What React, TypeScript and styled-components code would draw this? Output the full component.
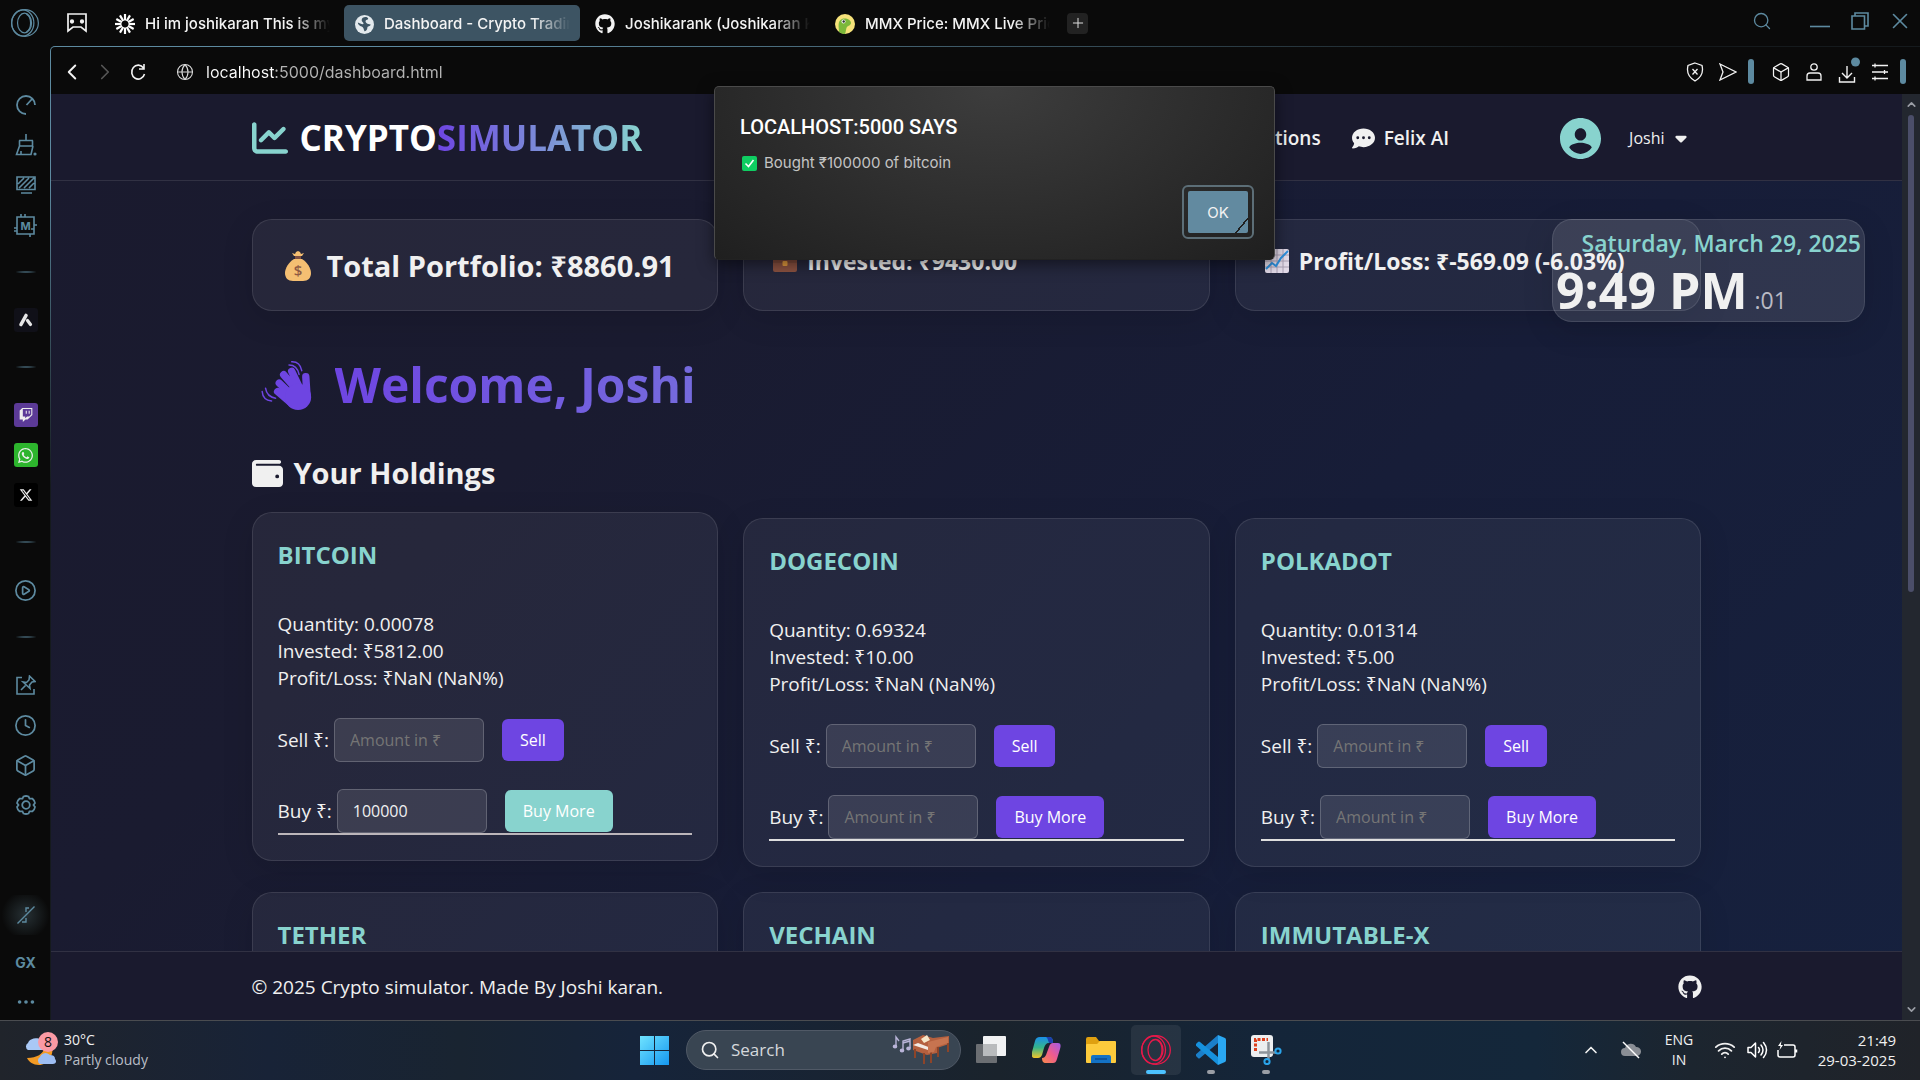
import React from "react";
import styled, { createGlobalStyle, css } from "styled-components";
import {
  Search, Globe, Box, Clock, CirclePlay, Ellipsis, Plus, ChevronLeft, ChevronRight,
  ChevronUp, ChevronDown, Minus, X, Wifi, Volume2,
} from "lucide-react";
import { FaChartLine, FaWallet, FaCommentDots, FaGithub, FaTwitch, FaWhatsapp, FaXTwitter, FaCaretDown } from "react-icons/fa6";

const c = {
  chrome: "#0a0a0a",
  accent: "#5d8aa0",
  ink: "#f0f0f0",
  teal: "#88d3ce",
  purple: "#6e45e2",
  navy: "#1a1a2e",
  line: "rgba(255, 255, 255, 0.1)",
};

const GlobalStyle = createGlobalStyle`
  *, *::before, *::after { box-sizing: border-box; }
  body { margin: 0; background: ${c.chrome}; font-family: "Open Sans", "Noto Sans", sans-serif; color: ${c.ink}; }
  h1, h2, h3, p { margin: 0; }
  button, input { font: inherit; color: inherit; }
  button { border: 0; padding: 0; background: none; cursor: pointer; }
  a { color: inherit; text-decoration: none; }
  svg { display: block; flex: none; }
`;

/* ---------- shell ---------- */

const Screen = styled.div`
  height: 100vh;
  display: grid;
  grid-template: 46px minmax(0, 1fr) 60px / 50px minmax(0, 1fr);
  overflow: hidden;
`;

const IconButton = styled.button<{ $w?: number; $color?: string }>`
  width: ${(p) => p.$w ?? 33}px;
  height: 40px;
  display: grid;
  place-items: center;
  flex: none;
  color: ${(p) => p.$color ?? "#f2f2f2"};
`;

const TabBar = styled.header`
  grid-column: 1 / -1;
  display: flex;
  align-items: center;
  background: ${c.chrome};
  font: 500 15px Inter, sans-serif;
`;

const TabList = styled.nav`
  display: flex;
  gap: 4px;
  margin-right: 7px;
`;

const Tab = styled.a<{ $active?: boolean }>`
  width: 236px;
  height: 36px;
  display: flex;
  align-items: center;
  gap: 10px;
  padding: 2px 10px 0 11px;
  border-radius: 5px;
  color: #f4f4f4;
  background: ${(p) => (p.$active ? "#3d5463" : "transparent")};
`;

const TabTitle = styled.span`
  flex: 1;
  overflow: hidden;
  white-space: nowrap;
  line-height: 24px;
  mask-image: linear-gradient(90deg, #000 80%, transparent);
`;

const NewTab = styled.button`
  width: 21px;
  height: 21px;
  display: grid;
  place-items: center;
  border-radius: 4px;
  background: #222;
  color: #ddd;
`;

const WindowControls = styled.div`
  margin-left: auto;
  display: flex;
  align-items: center;
  padding-bottom: 5px;
`;

const SideBar = styled.aside`
  display: flex;
  flex-direction: column;
  padding: 39px 0 0 1px;
  background: ${c.chrome};
  overflow: hidden;
`;

const SideItem = styled.button<{ $glow?: boolean }>`
  height: 40px;
  flex: none;
  display: grid;
  place-items: center;
  color: ${c.accent};
  font: 700 14px Inter, sans-serif;
  background: ${(p) => (p.$glow ? "radial-gradient(circle 24px, #263034, transparent)" : "none")};
`;

const Badge = styled.span<{ $bg: string }>`
  width: 24px;
  height: 24px;
  display: grid;
  place-items: center;
  border-radius: 3px;
  color: #eee;
  background: ${(p) => p.$bg};
`;

const SideRule = styled.hr`
  width: 24px;
  height: 2px;
  margin: 26px auto 27px;
  border: 0;
  flex: none;
  background: radial-gradient(closest-side, ${c.accent}, transparent);
`;

const SideBottom = styled.div`
  margin-top: auto;
  display: grid;
  grid-template-rows: 47px 40px 38px;
`;

const Frame = styled.div`
  position: relative;
  padding: 1px 0 0 1px;
  border-top-left-radius: 5px;
  background: radial-gradient(1500px 440px at 0 0, ${c.accent} 30%, #151a1d);
`;

const FrameInner = styled.div`
  height: 100%;
  display: flex;
  flex-direction: column;
  border-top-left-radius: 4px;
  overflow: hidden;
  background: ${c.chrome};
`;

const AddressBar = styled.div`
  height: 47px;
  flex: none;
  display: flex;
  align-items: center;
  padding: 2px 14px 0 4px;
`;

const AddressField = styled.label`
  flex: 1;
  display: flex;
  align-items: center;
  gap: 12px;
  margin-left: 22px;
`;

const AddressInput = styled.input`
  flex: 1;
  border: 0;
  padding: 0;
  outline: 0;
  font: 400 16px Inter, sans-serif;
  line-height: 24px;
  color: transparent;
  background: linear-gradient(90deg, #fff 69px, #b4b4b4 69px);
  background-clip: text;
  -webkit-background-clip: text;
`;

const AccentBar = styled.span`
  width: 6px;
  height: 25px;
  margin-left: 4px;
  border-radius: 3px;
  background: ${c.accent};
`;

const BarGroup = styled.div`
  display: flex;
  align-items: center;
  margin-left: 10px;
`;

/* ---------- page ---------- */

const Viewport = styled.div`
  flex: 1;
  min-height: 0;
  display: flex;
`;

const Page = styled.div`
  flex: 1;
  min-width: 0;
  position: relative;
  display: flex;
  flex-direction: column;
  background: linear-gradient(135deg, #1a1a2e 0%, #1a1b30 30%, #171d38 62%, #16213e 100%);
`;

const ScrollTrack = styled.div`
  width: 18px;
  flex: none;
  display: flex;
  flex-direction: column;
  align-items: center;
  gap: 4px;
  padding: 4px 0;
  background: #23272f;
  color: #9a9da5;
`;

const ScrollThumb = styled.div`
  width: 6px;
  flex: 0 0 52%;
  margin-bottom: auto;
  border-radius: 3px;
  background: #4b4e69;
`;

const Container = styled.div`
  width: 100%;
  max-width: 1450px;
  margin: 0 auto;
  padding-top: 2px;
  display: flex;
  align-items: center;
`;

const SiteHeader = styled.header`
  height: 87px;
  flex: none;
  display: flex;
  background: ${c.navy};
  border-bottom: 1px solid ${c.line};
`;

const Logo = styled.a`
  display: flex;
  align-items: center;
  gap: 12px;
  color: ${c.teal};
  font-size: 35px;
  line-height: 48px;
  font-weight: 700;
`;

const LogoText = styled.span`
  color: #fff;
`;

const gradientText = css`
  color: transparent;
  background: linear-gradient(90deg, ${c.purple}, ${c.teal});
  background-clip: text;
  -webkit-background-clip: text;
`;

const LogoAccent = styled.span`
  ${gradientText}
`;

const SiteNav = styled.nav`
  margin-left: auto;
  display: flex;
  gap: 31px;
  font-size: 19px;
  line-height: 26px;
  font-weight: 600;
`;

const NavLink = styled.a`
  display: flex;
  align-items: center;
  gap: 9px;
`;

const UserMenu = styled.button`
  display: flex;
  align-items: center;
  gap: 7px;
  margin: 0 12px 0 111px;
  font-size: 16px;
  line-height: 24px;
`;

const UserName = styled.span`
  margin-left: 21px;
`;

const Main = styled.main`
  flex: 1;
  min-height: 0;
  overflow: hidden;
  padding-top: 38px;
`;

const Content = styled.div`
  width: 100%;
  max-width: 1450px;
  margin: 0 auto;
`;

const CardGrid = styled.div`
  display: grid;
  grid-template-columns: repeat(3, minmax(0, 1fr));
  gap: 25px;
`;

const cardSurface = css`
  background: rgba(255, 255, 255, 0.055);
  border: 1px solid ${c.line};
  border-radius: 20px;
  box-shadow: 0 8px 32px rgba(0, 0, 0, 0.12);
`;

const SummaryCard = styled.section<{ $large?: boolean }>`
  ${cardSurface}
  height: 92px;
  display: flex;
  align-items: flex-start;
  gap: ${(p) => (p.$large ? 15 : 10)}px;
  padding: ${(p) => (p.$large ? "25px 31px" : "24px 29px")};
  font-weight: 700;
  font-size: ${(p) => (p.$large ? 29 : 23)}px;
  line-height: ${(p) => (p.$large ? 42 : 34)}px;
  white-space: nowrap;
  svg { margin: 5px 0; }
`;

const Welcome = styled.h1`
  display: flex;
  align-items: center;
  gap: 21px;
  margin-top: 40px;
  padding-left: 8px;
  font-size: 48px;
  line-height: 68px;
  font-weight: 700;
`;

const WelcomeText = styled.span`
  flex: 1;
  ${gradientText}
`;

const SectionTitle = styled.h2`
  display: flex;
  align-items: center;
  gap: 11px;
  margin: 34px 0 25px;
  font-size: 29px;
  line-height: 40px;
  font-weight: 700;
`;

const HoldingCard = styled.article<{ $hover?: boolean }>`
  ${cardSurface}
  height: 349px;
  padding: 25px;
  transform: ${(p) => (p.$hover ? "translateY(-6px)" : "none")};
`;

const CoinName = styled.h3`
  margin-bottom: 39px;
  font-size: 24px;
  line-height: 34px;
  font-weight: 700;
  color: ${c.teal};
`;

const Stat = styled.p`
  font-size: 19px;
  line-height: 27px;
`;

const TradeRow = styled.form`
  display: flex;
  align-items: center;
  margin-top: 26px;
  font-size: 19px;
  & + & { margin-top: 27px; }
`;

const AmountInput = styled.input`
  width: 150px;
  height: 44px;
  margin: 0 18px 0 5px;
  padding: 0 15px;
  border: 1px solid rgba(255, 255, 255, 0.2);
  border-radius: 6px;
  outline: 0;
  font-size: 16px;
  background: rgba(255, 255, 255, 0.1);
  &::placeholder { color: #757575; opacity: 1; }
`;

const TradeButton = styled.button<{ $hover?: boolean }>`
  height: 42px;
  padding: 0 18px;
  border-radius: 6px;
  font-size: 16px;
  color: #fff;
  background: ${(p) => (p.$hover ? c.teal : c.purple)};
`;

const CardRule = styled.hr<{ $dim?: boolean }>`
  height: 2px;
  margin: 0;
  border: 0;
  background: ${(p) => (p.$dim ? "#bcb6ba" : "#dedede")};
`;

const ClockPanel = styled.aside`
  position: absolute;
  top: 125px;
  right: 37px;
  height: 103px;
  width: 313px;
  padding: 6px 3px;
  border: 1px solid ${c.line};
  border-radius: 20px;
  background: rgba(255, 255, 255, 0.11);
  box-shadow: 0 8px 32px rgba(0, 0, 0, 0.12);
`;

const ClockDate = styled.div`
  text-align: right;
  font-size: 23px;
  line-height: 34px;
  font-weight: 600;
  color: ${c.teal};
  white-space: nowrap;
`;

const ClockTime = styled.div`
  display: flex;
  align-items: baseline;
  gap: 7px;
  font-size: 50px;
  line-height: 60px;
  font-weight: 700;
`;

const Seconds = styled.span`
  font-size: 23px;
  font-weight: 400;
  color: #b9bac4;
`;

const SiteFooter = styled.footer`
  height: 69px;
  flex: none;
  display: flex;
  background: ${c.navy};
  border-top: 1px solid ${c.line};
  font-size: 19px;
`;

const FooterLink = styled.a`
  margin-left: auto;
`;

/* ---------- dialog ---------- */

const Dialog = styled.div`
  position: absolute;
  top: 40px;
  left: calc(50% - 271px);
  width: 561px;
  height: 174px;
  padding: 27px 20px 20px 25px;
  display: flex;
  flex-direction: column;
  border: 1px solid #4a4a4a;
  border-bottom-color: #222;
  border-radius: 5px;
  background: radial-gradient(ellipse at 50% 0, #3d3d3d, #1f1f1f);
  box-shadow: 0 4px 16px rgba(0, 0, 0, 0.5);
  font-family: Inter, sans-serif;
`;

const DialogTitle = styled.h2`
  font: 500 20px/26px Roboto, sans-serif;
  text-transform: uppercase;
  color: #fff;
`;

const DialogMessage = styled.p`
  display: flex;
  align-items: center;
  gap: 7px;
  margin: 11px 0 0 2px;
  font-size: 15px;
  line-height: 24px;
  color: #c4c4c4;
`;

const OkButton = styled.button`
  margin: auto 0 0 auto;
  width: 72px;
  height: 54px;
  padding: 4px;
  border: 2px solid #5c6e77;
  border-radius: 6px;
  font-size: 15px;
  color: #f2f2f2;
`;

const OkFace = styled.span`
  height: 100%;
  display: grid;
  place-items: center;
  border-radius: 2px;
  background: linear-gradient(130deg, #628aa0 86%, #202020 86%, #202020 88%, #628aa0 88%);
`;

/* ---------- taskbar ---------- */

const TaskBar = styled.footer`
  grid-column: 1 / -1;
  display: grid;
  grid-template-columns: 1fr auto 1fr;
  align-items: center;
  border-top: 1px solid #4a4c50;
  padding-bottom: 1px;
  background: linear-gradient(90deg, #20242b 0, #182337 14%, #192431 24%, #16243a 33%, #1a232c 52%, #142539 66%, #14273a 80%, #1c252f 88%, #202329 100%);
  font-size: 14px;
  line-height: 20px;
`;

const Weather = styled.button`
  display: flex;
  align-items: center;
  gap: 5px;
  padding-left: 22px;
  text-align: left;
`;

const Muted = styled.div`
  color: #b9bec6;
`;

const TaskIcons = styled.div`
  display: flex;
  align-items: center;
  gap: 5px;
`;

const TaskButton = styled.button<{ $active?: boolean; $running?: boolean }>`
  position: relative;
  width: 50px;
  height: 50px;
  display: grid;
  place-items: center;
  border-radius: 5px;
  background: ${(p) => (p.$active ? "rgba(255,255,255,0.07)" : "none")};
  &::after {
    content: "";
    position: absolute;
    bottom: 1px;
    width: ${(p) => (p.$active ? 20 : p.$running ? 8 : 0)}px;
    height: 4px;
    border-radius: 2px;
    background: ${(p) => (p.$active ? "#4cc2ff" : "#9a9ea5")};
  }
`;

const TaskSearch = styled.label`
  width: 275px;
  height: 40px;
  display: flex;
  align-items: center;
  gap: 11px;
  margin-left: 2px;
  padding: 0 10px 0 13px;
  border: 1px solid #505966;
  border-radius: 20px;
  background: #394552;
`;

const TaskSearchInput = styled.input`
  flex: 1;
  min-width: 0;
  border: 0;
  padding: 0;
  outline: 0;
  background: none;
  font-size: 17px;
  &::placeholder { color: #d5d8dc; opacity: 1; }
`;

const Tray = styled.div`
  display: flex;
  align-items: center;
  justify-content: flex-end;
  padding-right: 24px;
`;

const TrayItem = styled.button<{ $w: number }>`
  width: ${(p) => p.$w}px;
  display: grid;
  justify-items: center;
  text-align: center;
`;

const TrayClock = styled.button`
  width: 93px;
  text-align: right;
  font-size: 15px;
`;

/* ---------- drawings ---------- */

const OperaMark = ({ size, color }: { size: number; color: string }) => (
  <svg width={size} height={size} viewBox="0 0 30 30" fill="none" stroke={color} strokeWidth="1.3">
    <ellipse cx="15" cy="15" rx="14.300" ry="14.300" />
    <path d="M15 .7C8 .7 4 6 2.700 12.500" opacity="0" />
    <ellipse cx="12.600" cy="15" rx="11.900" ry="14" />
    <ellipse cx="14.500" cy="15" rx="7.500" ry="10.500" />
    <path d="M16.500 5.500c6 3 6 16 0 19" />
  </svg>
);

const line = { fill: "none", stroke: "currentColor", strokeWidth: 1.6 } as const;

const PadIcon = () => (
  <svg width="20" height="20" viewBox="0 0 20 20" {...line} strokeWidth="1.700">
    <path d="M1 1h18v17l-5-4H6l-5 4z" />
    <circle cx="5" cy="8.500" r="1.300" fill="currentColor" /><circle cx="15" cy="8.500" r="1.300" fill="currentColor" />
  </svg>
);

const BurstIcon = () => (
  <svg width="20" height="20" viewBox="-10 -10 20 20" stroke="#fff" strokeWidth="2.200">
    {Array.from({ length: 12 }, (_, i) => <line key={i} x1="0" y1="-3.500" x2="0" y2="-10" transform={`rotate(${i * 30})`} />)}
  </svg>
);

const EarthIcon = () => (
  <svg width="19" height="19" viewBox="0 0 20 20">
    <circle cx="10" cy="10" r="10" fill="#e3e9ed" />
    <path d="M13 2.500c-3-1-6 .5-6 3 0 2 2 2 2 3.500S5 9 3 8c0 2 2 4 4 4 2 .5 2 3 3 5 1.500.5 3-1.500 3-3.500s3-1 3.500-3.500c-2-.5-3 0-4.500-1.500s-1-3 .5-3.500 2-1.500.5-2.500z" fill="#3d5463" />
  </svg>
);

const GeckoIcon = () => (
  <svg width="20" height="20" viewBox="0 0 20 20">
    <circle cx="10" cy="10" r="10" fill="#f6e27a" />
    <path d="M4 18c0-5-2-11 3-13 4-1.500 9 1 9 4 0 2-3 3-4 4s-1 5-2 7c-2 0-4-.5-6-2z" fill="#7cb83a" />
    <circle cx="8.500" cy="7.500" r="2" fill="#fff" /><circle cx="8.700" cy="7.500" r="1.200" fill="#333" />
  </svg>
);

const ReloadIcon = () => (
  <svg width="16" height="18" viewBox="0 0 16 18" {...line}>
    <path d="M13.500 5A6.500 7 0 1 0 14.500 11M14 1v5h-5" />
  </svg>
);

const GlobeLine = () => <Globe size={18} strokeWidth={1.5} color="#d8d8d8" />;

const SpeedIcon = () => (
  <svg width="20" height="20" viewBox="0 0 20 20" {...line} strokeWidth="1.800">
    <path d="M10 19A9 9 0 1 1 19 10M10.500 10l6-6.500" />
  </svg>
);

const BroomIcon = () => (
  <svg width="22" height="22" viewBox="0 0 22 22" {...line}>
    <path d="M11 0v6M4 6.500h14M4.500 6.500v5.500h13V6.500M4.500 12L1.500 20.500h14.500l2-8.500M6 20v-3" />
    <circle cx="20" cy="20" r=".8" fill="currentColor" />
  </svg>
);

const MonitorIcon = () => (
  <svg width="20" height="18" viewBox="0 0 20 18" {...line}>
    <path d="M1 1h18v12.500H1zM5 17h11M2 8l6-6M3 12L13 2M8 12L18 2M13 12l5-5" />
  </svg>
);

const ChipIcon = () => (
  <svg width="23" height="23" viewBox="0 0 23 23" {...line}>
    <path d="M3 3h17v17H3zM7 3V0M11 3V0M16 20v3M0 14h3M0 17h3M20 11h3M20 15h-3" />
    <text x="11.500" y="15.500" fontSize="11" fontWeight="700" textAnchor="middle" fill="currentColor" stroke="none" fontFamily="Inter">M</text>
  </svg>
);

const PeakIcon = () => (
  <svg width="16" height="16" viewBox="0 0 16 16" fill="none" stroke="#e6e6e6" strokeLinecap="round">
    <path d="M3 12.500L8 3.500" strokeWidth="3.600" /><path d="M9.500 8.500l3 4" strokeWidth="3.200" />
  </svg>
);

const PinIcon = () => (
  <svg width="20" height="20" viewBox="0 0 20 20" {...line}>
    <path d="M6 2.500H1V19h17v-5M13.500 1l5.500 5.500-3 .5-2.500 3 .5 3.500L7 7l3.500.5L13 5zM9.500 10.500L5 15" />
  </svg>
);

const CogIcon = () => (
  <svg width="20" height="20" viewBox="0 0 20 20" {...line} strokeWidth="1.800">
    <path d="M7.500 1.500Q10 .5 12.500 1.500L13.500 3.700 16.500 3.700Q18.700 5.500 19 8L17.500 10 19 12Q18.700 14.500 16.500 16.300L13.500 16.300 12.500 18.500Q10 19.500 7.500 18.500L6.500 16.300 3.500 16.300Q1.300 14.500 1 12L2.500 10 1 8Q1.300 5.500 3.500 3.700L6.500 3.700Z" />
    <circle cx="10" cy="10" r="3.800" />
  </svg>
);

const MuteNoteIcon = () => (
  <svg width="18" height="18" viewBox="0 0 18 18" {...line} strokeWidth="1.400">
    <path d="M.5 17.500l17-17M9 6V2h3M9 12v4H5" />
  </svg>
);

const ShieldX = () => (
  <svg width="18" height="20" viewBox="0 0 18 20" {...line} strokeWidth="1.300">
    <path d="M9 1l7 2.500q2.500 10-7 15.500Q-.5 13.500 2 3.500zM6.500 7l5 5.500M11.500 7l-5 5.500" />
  </svg>
);

const SendIcon = () => (
  <svg width="18" height="18" viewBox="0 0 18 18" {...line} strokeWidth="1.300"><path d="M1 1l16 8L1 17l3-8z" /></svg>
);

const PersonIcon = () => (
  <svg width="16" height="18" viewBox="0 0 16 18" {...line} strokeWidth="1.300">
    <circle cx="8" cy="4" r="3.200" /><path d="M1 17v-4q0-3 3-3h8q3 0 3 3v4z" />
  </svg>
);

const DownloadIcon = () => (
  <svg width="26" height="30" viewBox="0 0 26 30" {...line} strokeWidth="1.400">
    <path d="M13 9v12M8 16l5 5 5-5M5.500 20v5h15v-5" />
    <circle cx="21.500" cy="5" r="4.500" fill={c.accent} stroke="none" />
  </svg>
);

const SlidersIcon = () => (
  <svg width="16" height="18" viewBox="0 0 16 18" {...line} strokeWidth="1.300">
    <path d="M0 2.500h16M0 9h16M0 15.500h16M3 .5v4M12.500 7v4M3 13.500v4" />
  </svg>
);

const RestoreIcon = () => (
  <svg width="18" height="18" viewBox="0 0 18 18" {...line}><path d="M1 4h12.500v13H1zM4 4V1h13v13h-3.500" /></svg>
);

const MinimiseIcon = () => (
  <svg width="20" height="18" viewBox="0 0 20 18" {...line}><path d="M0 14.500h20" /></svg>
);

const AccountIcon = () => (
  <svg width="41" height="41" viewBox="2 2 20 20" fill={c.teal}>
    <path d="M12 2C6.480 2 2 6.480 2 12s4.480 10 10 10 10-4.480 10-10S17.520 2 12 2zm0 5c1.500 0 2.800 1.340 2.800 3s-1.300 3-2.800 3-2.800-1.340-2.800-3 1.300-3 2.800-3zm0 12.500a7 7 0 01-5.500-3.100c.6-1.600 3.500-2.300 5.500-2.300s4.900.7 5.500 2.300a7 7 0 01-5.500 3.100z" />
  </svg>
);

const MoneyBag = () => (
  <svg width="28" height="32" viewBox="0 0 28 32">
    <path d="M10 6L8 3l3 1 1-2 2-1 2 1 1 2 3-1-2 3z" fill="#f5bf72" />
    <path d="M11 6h6v3h-6z" fill="#7e4f43" />
    <path d="M10 9h8c5 3 9 9 9 14s-3 8-8 8H9c-5 0-8-3-8-8s4-11 9-14z" fill="#f5bf72" />
    <text x="14" y="25.500" fontSize="15" fontWeight="600" textAnchor="middle" fill="#8f5a44">$</text>
  </svg>
);

const Briefcase = () => (
  <svg width="24" height="24" viewBox="0 0 24 24">
    <path d="M8 5V2h8v3" fill="none" stroke="#5a3a32" strokeWidth="2" />
    <rect y="5" width="24" height="18" rx="2" fill="#8a5140" /><path d="M0 6h24v8H0z" fill="#7d4839" />
    <rect x="9.500" y="12" width="5" height="5" rx="1" fill="#e39a3d" />
  </svg>
);

const ChartEmoji = () => (
  <svg width="24" height="24" viewBox="0 0 24 24">
    <rect width="24" height="24" rx="2" fill="#e3dbe9" />
    <path d="M6 0v24M12 0v24M18 0v24M0 6h24M0 12h24M0 18h24" stroke="#aaa0b4" />
    <path d="M1 20l6-6 4 3 5-8 7-7" fill="none" stroke="#2d8fdc" strokeWidth="2" />
  </svg>
);

const WaveHand = () => (
  <svg width="54" height="51" viewBox="90 480 160 152" fill="none" stroke={c.purple} strokeLinecap="round">
    <g strokeWidth="22"><path d="M226 530l4 60M184 514l22 45M160 524l40 46M147 549l45 43M142 574l40 34" /></g>
    <circle cx="203" cy="590" r="39" fill={c.purple} stroke="none" />
    <path d="M184 485q25-1 30 27M176 495q24 0 30 28M96 574q2 26 28 28M106 564q4 26 30 30" strokeWidth="4.500" />
  </svg>
);

const CheckEmoji = () => (
  <svg width="15" height="15" viewBox="0 0 15 15">
    <rect width="15" height="15" rx="2" fill="#0fce62" /><path d="M3.500 7.500l3 3 5-6.500" fill="none" stroke="#fff" strokeWidth="1.600" />
  </svg>
);

const WeatherArt = () => (
  <svg width="37" height="38" viewBox="0 0 37 38">
    <path d="M5 27c10 0 16-4 18-11h7c2 8-4 18-13 18-6 0-10-3-12-7z" fill="#f39a24" />
    <path d="M6 19a4 4 0 010-7 8 7 0 0113-3l4 10z" fill="#a9c8f5" />
    <path d="M18 33a4 4 0 010-7 6 6 0 0110-2c5 0 5 3 5 4 2 2 1 5-2 5z" fill="#9dbdf2" />
    <circle cx="26" cy="11" r="10" fill="#fb9aa4" />
    <text x="26" y="16" fontSize="14" textAnchor="middle" fill="#111">8</text>
  </svg>
);

const WindowsMark = () => (
  <svg width="29" height="29" viewBox="0 0 29 29">
    <defs><linearGradient id="win" x1="0" y1="0" x2="1" y2="1" gradientUnits="objectBoundingBox"><stop stopColor="#6fe3ff" /><stop offset="1" stopColor="#1597f0" /></linearGradient></defs>
    <path d="M0 0h14v14H0zM15 0h14v14H15zM0 15h14v14H0zM15 15h14v14H15z" fill="url(#win)" />
  </svg>
);

const PianoArt = () => (
  <svg width="58" height="30" viewBox="0 0 58 30">
    <g stroke="#b9b4d8" strokeWidth="1.400" fill="#b9b4d8">
      <path d="M4 11V2l3 4M11 15V6l7-2v9M11 8l7-2" fill="none" />
      <ellipse cx="3" cy="11.500" rx="1.600" ry="1.200" /><ellipse cx="10" cy="15.500" rx="1.600" ry="1.200" /><ellipse cx="16.500" cy="13.500" rx="1.600" ry="1.200" />
    </g>
    <path d="M21 5l10-5 10 3 16-2v8l-12 4v5l-10 2-14-5z" fill="#b5603f" />
    <path d="M29 4l6-4 3 5-6 3z" fill="#f6e6c8" /><path d="M21 10l15 5 3-2-13-5z" fill="#f3e9e2" />
    <path d="M23 14v9M32 18v11M39 17v11M46 12v10M56 8v9" stroke="#8d4429" strokeWidth="2" />
    <path d="M36 7l20-5v6l-12 4-2 5-6 1z" fill="#c77450" />
  </svg>
);

const TaskViewArt = () => (
  <svg width="30" height="28" viewBox="0 0 30 28">
    <rect y="8" width="21" height="19" rx="1" fill="#6b6e72" /><rect x="7" width="23" height="20" rx="1" fill="#f1f2f3" />
    <path d="M7 8h14v12H7z" fill="#b9bbbd" />
  </svg>
);

const CopilotArt = () => (
  <svg width="29" height="26" viewBox="0 0 29 26">
    <defs>
      <linearGradient id="cpA" x1="0" y1="0" x2="0" y2="1"><stop stopColor="#1a8fe8" /><stop offset=".5" stopColor="#35b58a" /><stop offset="1" stopColor="#f2c62a" /></linearGradient>
      <linearGradient id="cpB" x1="1" y1="0" x2="0" y2="1"><stop stopColor="#a05be8" /><stop offset=".5" stopColor="#ee5b8f" /><stop offset="1" stopColor="#f98a4a" /></linearGradient>
    </defs>
    <path d="M8 0h9c3 0 4 2 4 6h-4c-3 0-4 2-5 5l-2 7c-1 2-2 3-4 3H3c-3 0-4-2-3-6L3 4c1-3 2-4 5-4z" fill="url(#cpA)" />
    <path d="M14 0h3c3 0 4 2 4 6h-4c-1-2-1-5-3-6z" fill="#1d3fae" />
    <path d="M21 26h-7c-3 0-4-2-4-5 2 0 3-1 4-3l3-8c1-3 2-4 4-4h5c3 0 3 3 2 6l-3 10c-1 3-2 4-4 4z" fill="url(#cpB)" />
  </svg>
);

const FolderArt = () => (
  <svg width="30" height="28" viewBox="0 0 30 28">
    <path d="M0 3q0-2 2-2h8l3 4h14v8H0z" fill="#dfa010" /><path d="M0 9q0-1 1-1h10l3-3h15q1 0 1 1v20q0 1-1 1H1q-1 0-1-1z" fill="#fdcb3c" />
    <path d="M5 27v-6q0-2 2-2h16q2 0 2 2v6z" fill="#1472c4" /><path d="M9 23h12" stroke="#0b4f96" strokeWidth="1.600" />
  </svg>
);

const CodeArt = () => (
  <svg width="30" height="30" viewBox="0 0 30 30">
    <path d="M22 0v8L4 23q-1 1-2 0l-2-2q-.6-1 0-1.700z" fill="#1b7fc9" />
    <path d="M22 30v-8L4 7Q3 6 2 7L0 9q-.6 1 0 1.700z" fill="#1691dd" />
    <path d="M22 0l7 3q1 .5 1 2v20q0 1.500-1 2l-7 3z" fill="#2aa8f2" />
  </svg>
);

const SnipArt = () => (
  <svg width="32" height="30" viewBox="0 0 32 30">
    <rect x="1" width="22" height="22" rx="3" fill="#eceef0" />
    <path d="M5.500 16V4.500H18" fill="none" stroke="#dd3f1c" strokeWidth="3" strokeDasharray="3 1.500" />
    <path d="M18.500 7v17M9 17.500h17" stroke="#8d949b" strokeWidth="2.500" />
    <circle cx="28" cy="16" r="2.600" fill="none" stroke="#2aa4ea" strokeWidth="2" /><circle cx="17" cy="26.500" r="2.600" fill="none" stroke="#2aa4ea" strokeWidth="2" />
  </svg>
);

const CloudOff = () => (
  <svg width="20" height="18" viewBox="0 0 20 18">
    <path d="M4 15a4 4 0 010-8 6 6 0 0111-1 4.500 4.500 0 011 9z" fill="#8a8e95" /><path d="M2 1l16 16" stroke="#fff" strokeWidth="1.500" />
  </svg>
);

const BatteryArt = () => (
  <svg width="21" height="18" viewBox="0 0 21 18" fill="none" stroke="#fff" strokeWidth="1.500">
    <path d="M7 4h9q2 0 2 2v8q0 2-2 2H3q-2 0-2-2V9M19.500 8.500v3" /><path d="M4.500 0L1 5h2.500L2.500 9 6 4H3.800z" fill="#fff" stroke="none" />
  </svg>
);

const SpeakerArt = () => (
  <svg width="21" height="18" viewBox="0 0 21 18" fill="none" stroke="#fff" strokeWidth="1.500" strokeLinejoin="round" strokeLinecap="round">
    <path d="M1 6.500h3L8.500 2v14L4 11.500H1zM11.500 6.500q2 2.500 0 5M14 4q4 5 0 10M16.500 1.500q6 7.500 0 15" />
  </svg>
);

/* ---------- data ---------- */

const tabs = [
  { title: "Hi im joshikaran This is my", icon: <BurstIcon /> },
  { title: "Dashboard - Crypto Trading", icon: <EarthIcon />, active: true },
  { title: "Joshikarank (Joshikaran K)", icon: <FaGithub size={20} /> },
  { title: "MMX Price: MMX Live Price", icon: <GeckoIcon /> },
];

type Holding = { name: string; quantity: string; invested: string; buy?: string; hover?: boolean };

const holdings: Holding[] = [
  { name: "BITCOIN", quantity: "0.00078", invested: "5812.00", buy: "100000", hover: true },
  { name: "DOGECOIN", quantity: "0.69324", invested: "10.00" },
  { name: "POLKADOT", quantity: "0.01314", invested: "5.00" },
  { name: "TETHER", quantity: "", invested: "" },
  { name: "VECHAIN", quantity: "", invested: "" },
  { name: "IMMUTABLE-X", quantity: "", invested: "" },
];

const HoldingTile = ({ h }: { h: Holding }) => {
  const id = h.name.toLowerCase();
  return (
    <HoldingCard $hover={h.hover}>
      <CoinName>{h.name}</CoinName>
      {h.quantity && (
        <>
          <Stat>Quantity: {h.quantity}</Stat>
          <Stat>Invested: ₹{h.invested}</Stat>
          <Stat>Profit/Loss: ₹NaN (NaN%)</Stat>
          <TradeRow>
            <label htmlFor={`${id}-sell`}>Sell ₹:</label>
            <AmountInput id={`${id}-sell`} placeholder="Amount in ₹" />
            <TradeButton type="button">Sell</TradeButton>
          </TradeRow>
          <TradeRow>
            <label htmlFor={`${id}-buy`}>Buy ₹:</label>
            <AmountInput id={`${id}-buy`} placeholder="Amount in ₹" defaultValue={h.buy} />
            <TradeButton type="button" $hover={h.hover}>Buy More</TradeButton>
          </TradeRow>
          <CardRule $dim={h.hover} />
        </>
      )}
    </HoldingCard>
  );
};

export default function App() {
  return (
    <Screen>
      <GlobalStyle />
      <TabBar>
        <IconButton $w={50} aria-label="Menu"><OperaMark size={28} color={c.accent} /></IconButton>
        <IconButton $w={54} aria-label="GX Corner"><PadIcon /></IconButton>
        <TabList>
          {tabs.map((t) => (
            <Tab key={t.title} href="#" $active={t.active}>
              {t.icon}
              <TabTitle>{t.title}</TabTitle>
            </Tab>
          ))}
        </TabList>
        <NewTab aria-label="New tab"><Plus size={16} strokeWidth={1.5} /></NewTab>
        <WindowControls>
          <IconButton $w={76} $color={c.accent} aria-label="Search tabs"><Search size={20} strokeWidth={1.6} /></IconButton>
          <IconButton $w={40} $color={c.accent} aria-label="Minimise"><MinimiseIcon /></IconButton>
          <IconButton $w={40} $color={c.accent} aria-label="Restore"><RestoreIcon /></IconButton>
          <IconButton $w={40} $color={c.accent} aria-label="Close"><X size={26} strokeWidth={1.5} /></IconButton>
        </WindowControls>
      </TabBar>

      <SideBar>
        <SideItem><SpeedIcon /></SideItem>
        <SideItem><BroomIcon /></SideItem>
        <SideItem><MonitorIcon /></SideItem>
        <SideItem><ChipIcon /></SideItem>
        <SideRule />
        <SideItem><Badge $bg="#101018"><PeakIcon /></Badge></SideItem>
        <SideRule />
        <SideItem><Badge $bg="#5c3a97"><FaTwitch size={14} /></Badge></SideItem>
        <SideItem><Badge $bg="#2db52d"><FaWhatsapp size={17} /></Badge></SideItem>
        <SideItem><Badge $bg="#000"><FaXTwitter size={14} /></Badge></SideItem>
        <SideRule />
        <SideItem><CirclePlay size={23} strokeWidth={1.8} /></SideItem>
        <SideRule />
        <SideItem><PinIcon /></SideItem>
        <SideItem><Clock size={23} strokeWidth={1.8} /></SideItem>
        <SideItem><Box size={23} strokeWidth={1.8} /></SideItem>
        <SideItem><CogIcon /></SideItem>
        <SideBottom>
          <SideItem $glow><MuteNoteIcon /></SideItem>
          <SideItem>GX</SideItem>
          <SideItem><Ellipsis size={22} /></SideItem>
        </SideBottom>
      </SideBar>

      <Frame>
        <FrameInner>
          <AddressBar>
            <IconButton aria-label="Back"><ChevronLeft size={26} strokeWidth={1.8} /></IconButton>
            <IconButton $color="#555" aria-label="Forward"><ChevronRight size={26} strokeWidth={1.6} /></IconButton>
            <IconButton aria-label="Reload"><ReloadIcon /></IconButton>
            <AddressField>
              <GlobeLine />
              <AddressInput aria-label="Address" defaultValue="localhost:5000/dashboard.html" />
            </AddressField>
            <IconButton><ShieldX /></IconButton>
            <IconButton><SendIcon /></IconButton>
            <AccentBar />
            <BarGroup>
              <IconButton><Box size={20} strokeWidth={1.5} /></IconButton>
              <IconButton><PersonIcon /></IconButton>
              <IconButton><DownloadIcon /></IconButton>
              <IconButton><SlidersIcon /></IconButton>
            </BarGroup>
            <AccentBar />
          </AddressBar>

          <Viewport>
            <Page>
              <SiteHeader>
                <Container>
                  <Logo href="#">
                    <FaChartLine size={36} />
                    <LogoText>CRYPTO<LogoAccent>SIMULATOR</LogoAccent></LogoText>
                  </Logo>
                  <SiteNav>
                    <NavLink href="#">Transactions</NavLink>
                    <NavLink href="#"><FaCommentDots size={23} />Felix AI</NavLink>
                  </SiteNav>
                  <UserMenu>
                    <AccountIcon />
                    <UserName>Joshi</UserName>
                    <FaCaretDown size={18} />
                  </UserMenu>
                </Container>
              </SiteHeader>

              <Main>
                <Content>
                  <CardGrid>
                    <SummaryCard $large><MoneyBag />Total Portfolio: ₹8860.91</SummaryCard>
                    <SummaryCard><Briefcase />Invested: ₹9430.00</SummaryCard>
                    <SummaryCard><ChartEmoji />Profit/Loss: ₹-569.09 (-6.03%)</SummaryCard>
                  </CardGrid>
                  <Welcome><WaveHand /><WelcomeText>Welcome, Joshi</WelcomeText></Welcome>
                  <SectionTitle><FaWallet size={31} />Your Holdings</SectionTitle>
                  <CardGrid>
                    {holdings.map((h) => <HoldingTile key={h.name} h={h} />)}
                  </CardGrid>
                </Content>
              </Main>

              <SiteFooter>
                <Container>
                  <span>© 2025 Crypto simulator. Made By Joshi karan.</span>
                  <FooterLink href="#" aria-label="GitHub"><FaGithub size={24} /></FooterLink>
                </Container>
              </SiteFooter>

              <ClockPanel>
                <ClockDate>Saturday, March 29, 2025</ClockDate>
                <ClockTime>9:49 PM<Seconds>:01</Seconds></ClockTime>
              </ClockPanel>
            </Page>
            <ScrollTrack>
              <ChevronUp size={13} strokeWidth={3} />
              <ScrollThumb />
              <ChevronDown size={13} strokeWidth={3} />
            </ScrollTrack>
          </Viewport>
        </FrameInner>

        <Dialog role="alertdialog" aria-labelledby="dialog-title">
          <DialogTitle id="dialog-title">localhost:5000 says</DialogTitle>
          <DialogMessage><CheckEmoji />Bought ₹100000 of bitcoin</DialogMessage>
          <OkButton><OkFace>OK</OkFace></OkButton>
        </Dialog>
      </Frame>

      <TaskBar>
        <Weather>
          <WeatherArt />
          <div>
            <div>30°C</div>
            <Muted>Partly cloudy</Muted>
          </div>
        </Weather>
        <TaskIcons>
          <TaskButton aria-label="Start"><WindowsMark /></TaskButton>
          <TaskSearch>
            <Search size={20} strokeWidth={2} />
            <TaskSearchInput placeholder="Search" aria-label="Search" />
            <PianoArt />
          </TaskSearch>
          <TaskButton><TaskViewArt /></TaskButton>
          <TaskButton><CopilotArt /></TaskButton>
          <TaskButton><FolderArt /></TaskButton>
          <TaskButton $active><OperaMark size={30} color="#e8194a" /></TaskButton>
          <TaskButton $running><CodeArt /></TaskButton>
          <TaskButton $running><SnipArt /></TaskButton>
        </TaskIcons>
        <Tray>
          <TrayItem $w={40}><ChevronUp size={20} /></TrayItem>
          <TrayItem $w={40}><CloudOff /></TrayItem>
          <TrayItem $w={56}><span>ENG</span><span>IN</span></TrayItem>
          <TrayItem $w={36}><Wifi size={22} /></TrayItem>
          <TrayItem $w={28}><SpeakerArt /></TrayItem>
          <TrayItem $w={32}><BatteryArt /></TrayItem>
          <TrayClock><div>21:49</div><div>29-03-2025</div></TrayClock>
        </Tray>
      </TaskBar>
    </Screen>
  );
}
